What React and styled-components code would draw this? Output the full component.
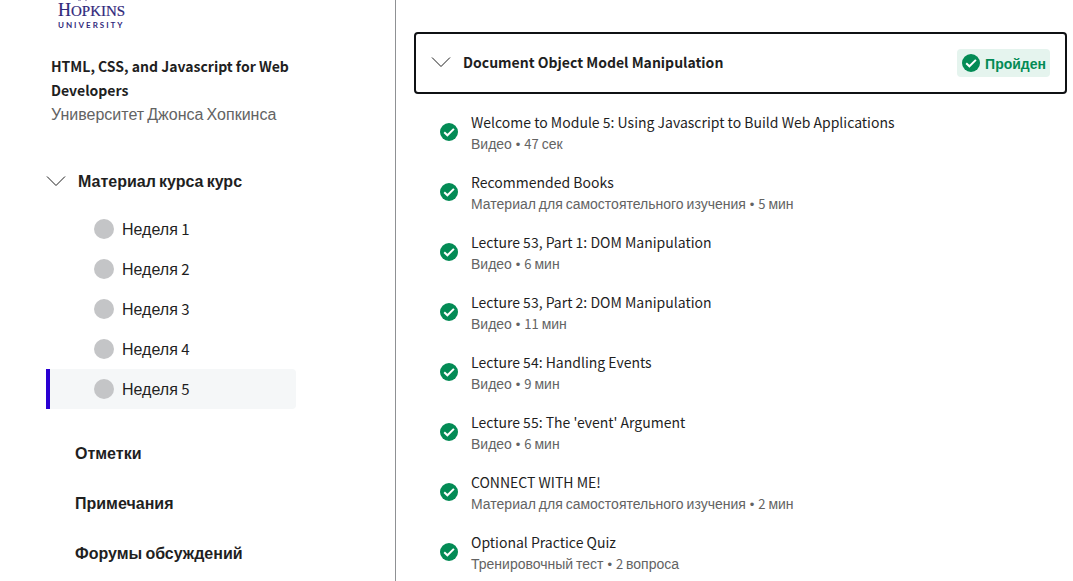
import React from "react";
import styled, { createGlobalStyle } from "styled-components";

const GlobalStyle = createGlobalStyle`
  * { box-sizing: border-box; }
  body {
    margin: 0;
    background: #fff;
    color: #1f1f1f;
    font-family: "Noto Sans CJK SC", "Liberation Sans", sans-serif;
    font-size: 14px;
    line-height: 24px;
  }
  ul { list-style: none; margin: 0; padding: 0; }
  h1, h2, p { margin: 0; }
  a { color: inherit; text-decoration: none; }
`;

const Layout = styled.div`
  display: grid;
  grid-template-columns: 396px minmax(0, 1fr);
  min-height: 100vh;
`;

const Sidebar = styled.aside`
  border-right: 1px solid #8f9194;
  padding: 0 99px 0 46px;
`;

const Logo = styled.svg`
  display: block;
  width: 80px;
  height: 32px;
  margin-left: 5px;
`;

const CourseInfo = styled.header`
  padding: 22px 0 0 5px;
`;

const CourseTitle = styled.h1`
  font-size: 14px;
  font-weight: 700;
`;

const Partner = styled.p`
  color: #636363;
`;

const Cyrillic = styled.span`
  font-family: "Liberation Sans", sans-serif;
  font-size: ${(p) => (p.$small ? 14 : 16)}px;
  line-height: 16px;
`;

const Bullet = styled.span`
  margin: 0 1px;
  font-family: "Liberation Sans", sans-serif;
  line-height: 16px;
`;

const Chevron = styled.svg`
  display: block;
  flex: none;
  width: 20px;
  height: 20px;
  fill: none;
  stroke: #1f1f1f;
`;

const NavToggle = styled.button`
  display: flex;
  align-items: center;
  gap: 12px;
  width: 100%;
  margin-top: 43px;
  padding: 0;
  border: 0;
  background: none;
  color: inherit;
  font: inherit;
  font-weight: 700;
  text-align: left;
  cursor: pointer;
`;

const WeekList = styled.ul`
  padding-top: 16px;
`;

const WeekLink = styled.a`
  display: flex;
  align-items: center;
  gap: 8px;
  height: 40px;
  padding-left: 44px;
  border-left: 4px solid ${(p) => (p.$active ? "#2a00d2" : "transparent")};
  border-radius: 0 4px 4px 0;
  background: ${(p) => (p.$active ? "#f5f7f8" : "transparent")};
  font-size: 15px;
`;

const Dot = styled.span`
  flex: none;
  width: 20px;
  height: 20px;
  border-radius: 50%;
  background: #c4c5c7;
`;

const SectionList = styled.ul`
  padding-top: 19px;
`;

const SectionLink = styled.a`
  display: flex;
  align-items: center;
  height: 50px;
  padding-left: 29px;
  font-weight: 700;
`;

const Main = styled.main`
  padding: 32px 6px 0 18px;
`;

const ModuleHeader = styled.button`
  display: flex;
  align-items: center;
  justify-content: space-between;
  width: 100%;
  height: 62px;
  padding: 0 15px;
  border: 2px solid #0f1114;
  border-radius: 4px;
  background: #fff;
  color: inherit;
  font: inherit;
  text-align: left;
  cursor: pointer;
`;

const ModuleTitle = styled.span`
  display: flex;
  align-items: center;
  gap: 12px;
  padding-bottom: 3px;
  font-weight: 700;
`;

const Badge = styled.span`
  display: flex;
  align-items: center;
  gap: 4px;
  height: 28px;
  padding: 0 4px;
  border-radius: 4px;
  background: #e5f4ee;
  color: #038b55;
  font-weight: 700;
`;

const Check = styled.svg`
  display: block;
  flex: none;
  width: 20px;
  height: 20px;
`;

const Lessons = styled.ul`
  padding: 16px 0 0 25px;
`;

const Lesson = styled.a`
  display: flex;
  align-items: center;
  gap: 12px;
  height: 60px;
  padding-bottom: 16px;
`;

const LessonTitle = styled.span`
  display: block;
  line-height: 24px;
`;

const LessonMeta = styled.span`
  display: block;
  color: #636363;
  font-size: 13px;
  line-height: 20px;
`;

/* Sets Cyrillic words in their own face; digits, marks and spaces keep the base one. */
function Text({ children, small }) {
  return children.split(/([а-яё]+|•)/i).map((part, i) => {
    if (part === "•") return <Bullet key={i}>•</Bullet>;
    return i % 2 ? <Cyrillic key={i} $small={small}>{part}</Cyrillic> : part;
  });
}

function ChevronDown() {
  return (
    <Chevron viewBox="0 0 20 20" aria-hidden="true">
      <path d="M1 5.500L10 14.500L19 5.500" />
    </Chevron>
  );
}

function CheckCircle() {
  return (
    <Check viewBox="0 0 20 20" aria-hidden="true">
      <circle cx="10" cy="10" r="9" fill="#038b55" />
      <path d="M5.200 10.200L8.400 13.300L14.900 6.900" fill="none" stroke="#fff" strokeWidth="2" />
    </Check>
  );
}

const weeks = [1, 2, 3, 4, 5];
const sections = ["Отметки", "Примечания", "Форумы обсуждений"];
const lessons = [
  ["Welcome to Module 5: Using Javascript to Build Web Applications", "Видео • 47 сек"],
  ["Recommended Books", "Материал для самостоятельного изучения • 5 мин"],
  ["Lecture 53, Part 1: DOM Manipulation", "Видео • 6 мин"],
  ["Lecture 53, Part 2: DOM Manipulation", "Видео • 11 мин"],
  ["Lecture 54: Handling Events", "Видео • 9 мин"],
  ["Lecture 55: The 'event' Argument", "Видео • 6 мин"],
  ["CONNECT WITH ME!", "Материал для самостоятельного изучения • 2 мин"],
  ["Optional Practice Quiz", "Тренировочный тест • 2 вопроса"],
];

export default function App() {
  return (
    <>
      <GlobalStyle />
      <Layout>
        <Sidebar>
          <Logo viewBox="0 0 80 32" role="img" aria-label="Johns Hopkins University" fill="#31297b">
            <path d="M27 0h3v1h-3zM34 0h2v1h-2z" opacity="0.4" />
            <text x="7" y="16" fontFamily="Liberation Serif, serif" fontSize="18" stroke="#31297b" strokeWidth="0.2">
              H<tspan fontSize="15">OPKINS</tspan>
            </text>
            <text x="7" y="28" fontFamily="Lato, sans-serif" fontSize="8" fontWeight="700" letterSpacing="2">
              UNIVERSITY
            </text>
          </Logo>
          <CourseInfo>
            <CourseTitle>HTML, CSS, and Javascript for Web Developers</CourseTitle>
            <Partner><Text>Университет Джонса Хопкинса</Text></Partner>
          </CourseInfo>
          <nav>
            <NavToggle type="button" aria-expanded="true">
              <ChevronDown />
              <span><Text>Материал курса курс</Text></span>
            </NavToggle>
            <WeekList>
              {weeks.map((n) => (
                <li key={n}>
                  <WeekLink href={`#week-${n}`} $active={n === 5}>
                    <Dot />
                    <span><Text>{`Неделя ${n}`}</Text></span>
                  </WeekLink>
                </li>
              ))}
            </WeekList>
            <SectionList>
              {sections.map((name, i) => (
                <li key={name}>
                  <SectionLink href={`#section-${i + 1}`}><span><Text>{name}</Text></span></SectionLink>
                </li>
              ))}
            </SectionList>
          </nav>
        </Sidebar>
        <Main>
          <ModuleHeader type="button" aria-expanded="true">
            <ModuleTitle>
              <ChevronDown />
              Document Object Model Manipulation
            </ModuleTitle>
            <Badge>
              <CheckCircle />
              <span><Text small>Пройден</Text></span>
            </Badge>
          </ModuleHeader>
          <Lessons>
            {lessons.map(([title, meta]) => (
              <li key={title}>
                <Lesson href="#lesson">
                  <CheckCircle />
                  <span>
                    <LessonTitle>{title}</LessonTitle>
                    <LessonMeta><Text small>{meta}</Text></LessonMeta>
                  </span>
                </Lesson>
              </li>
            ))}
          </Lessons>
        </Main>
      </Layout>
    </>
  );
}
